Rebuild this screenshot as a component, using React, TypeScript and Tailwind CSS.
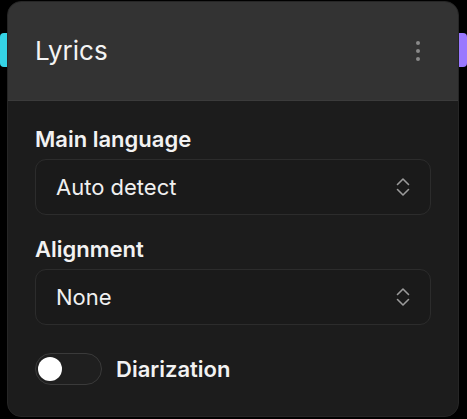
import React from "react";

function UpDown() {
  return (
    <svg width="14" height="20" viewBox="0 0 14 20" fill="none" stroke="#9a9a9a" strokeWidth="1.6" strokeLinecap="round" strokeLinejoin="round">
      <path d="M1.5 7.5 L7 2 L12.5 7.5" />
      <path d="M1.5 12.5 L7 18 L12.5 12.5" />
    </svg>
  );
}

function Select({ value }: { value: string }) {
  return (
    <div className="mt-[6px] h-[56px] w-full rounded-[11px] border border-[#2c2c2c] bg-[#1a1a1a] flex items-center justify-between pl-[20px] pr-[20px]">
      <span className="text-[22px] leading-[28px] text-[#f0f0f0]">{value}</span>
      <UpDown />
    </div>
  );
}

export default function App() {
  return (
    <div
      className="relative w-[467px] h-[419px] bg-black overflow-hidden"
      style={{ fontFamily: "Inter, 'Noto Sans', sans-serif" }}
    >
      <div className="absolute left-0 top-[33px] w-[14px] h-[34px] rounded-[4px] bg-[#35d4e6]" />
      <div className="absolute right-0 top-[33px] w-[14px] h-[34px] rounded-[4px] bg-[#9a78ff]" />
      <div className="relative ml-[7px] mt-[1px] w-[452px] h-[416px] rounded-[14px] bg-[#1c1c1c] border border-[#262626] overflow-hidden flex flex-col">
        <div className="h-[99px] shrink-0 bg-[#333333] border-b border-[#3b3b3b] flex items-center justify-between pl-[27px] pr-[27px]">
          <span className="text-[26px] leading-[34px] text-[#f4f4f4] font-normal">Lyrics</span>
          <div className="w-[26px] flex flex-col items-center gap-[4px]">
            <span className="w-[4px] h-[4px] rounded-full bg-[#8a8a8a]" />
            <span className="w-[4px] h-[4px] rounded-full bg-[#8a8a8a]" />
            <span className="w-[4px] h-[4px] rounded-full bg-[#8a8a8a]" />
          </div>
        </div>
        <div className="flex flex-col px-[27px] pt-[24px]">
          <span className="text-[22px] leading-[28px] font-semibold text-[#f2f2f2]">Main language</span>
          <Select value="Auto detect" />
          <span className="mt-[20px] text-[22px] leading-[28px] font-semibold text-[#f2f2f2]">Alignment</span>
          <Select value="None" />
          <div className="mt-[28px] flex items-center gap-[14px]">
            <div className="w-[67px] h-[32px] rounded-full border-[1.5px] border-[#3a3a3a] bg-[#1f1f1f] flex items-center pl-[2px]">
              <span className="w-[24px] h-[24px] rounded-full bg-white" />
            </div>
            <span className="text-[22px] leading-[28px] font-semibold text-[#f2f2f2]">Diarization</span>
          </div>
        </div>
      </div>
    </div>
  );
}
